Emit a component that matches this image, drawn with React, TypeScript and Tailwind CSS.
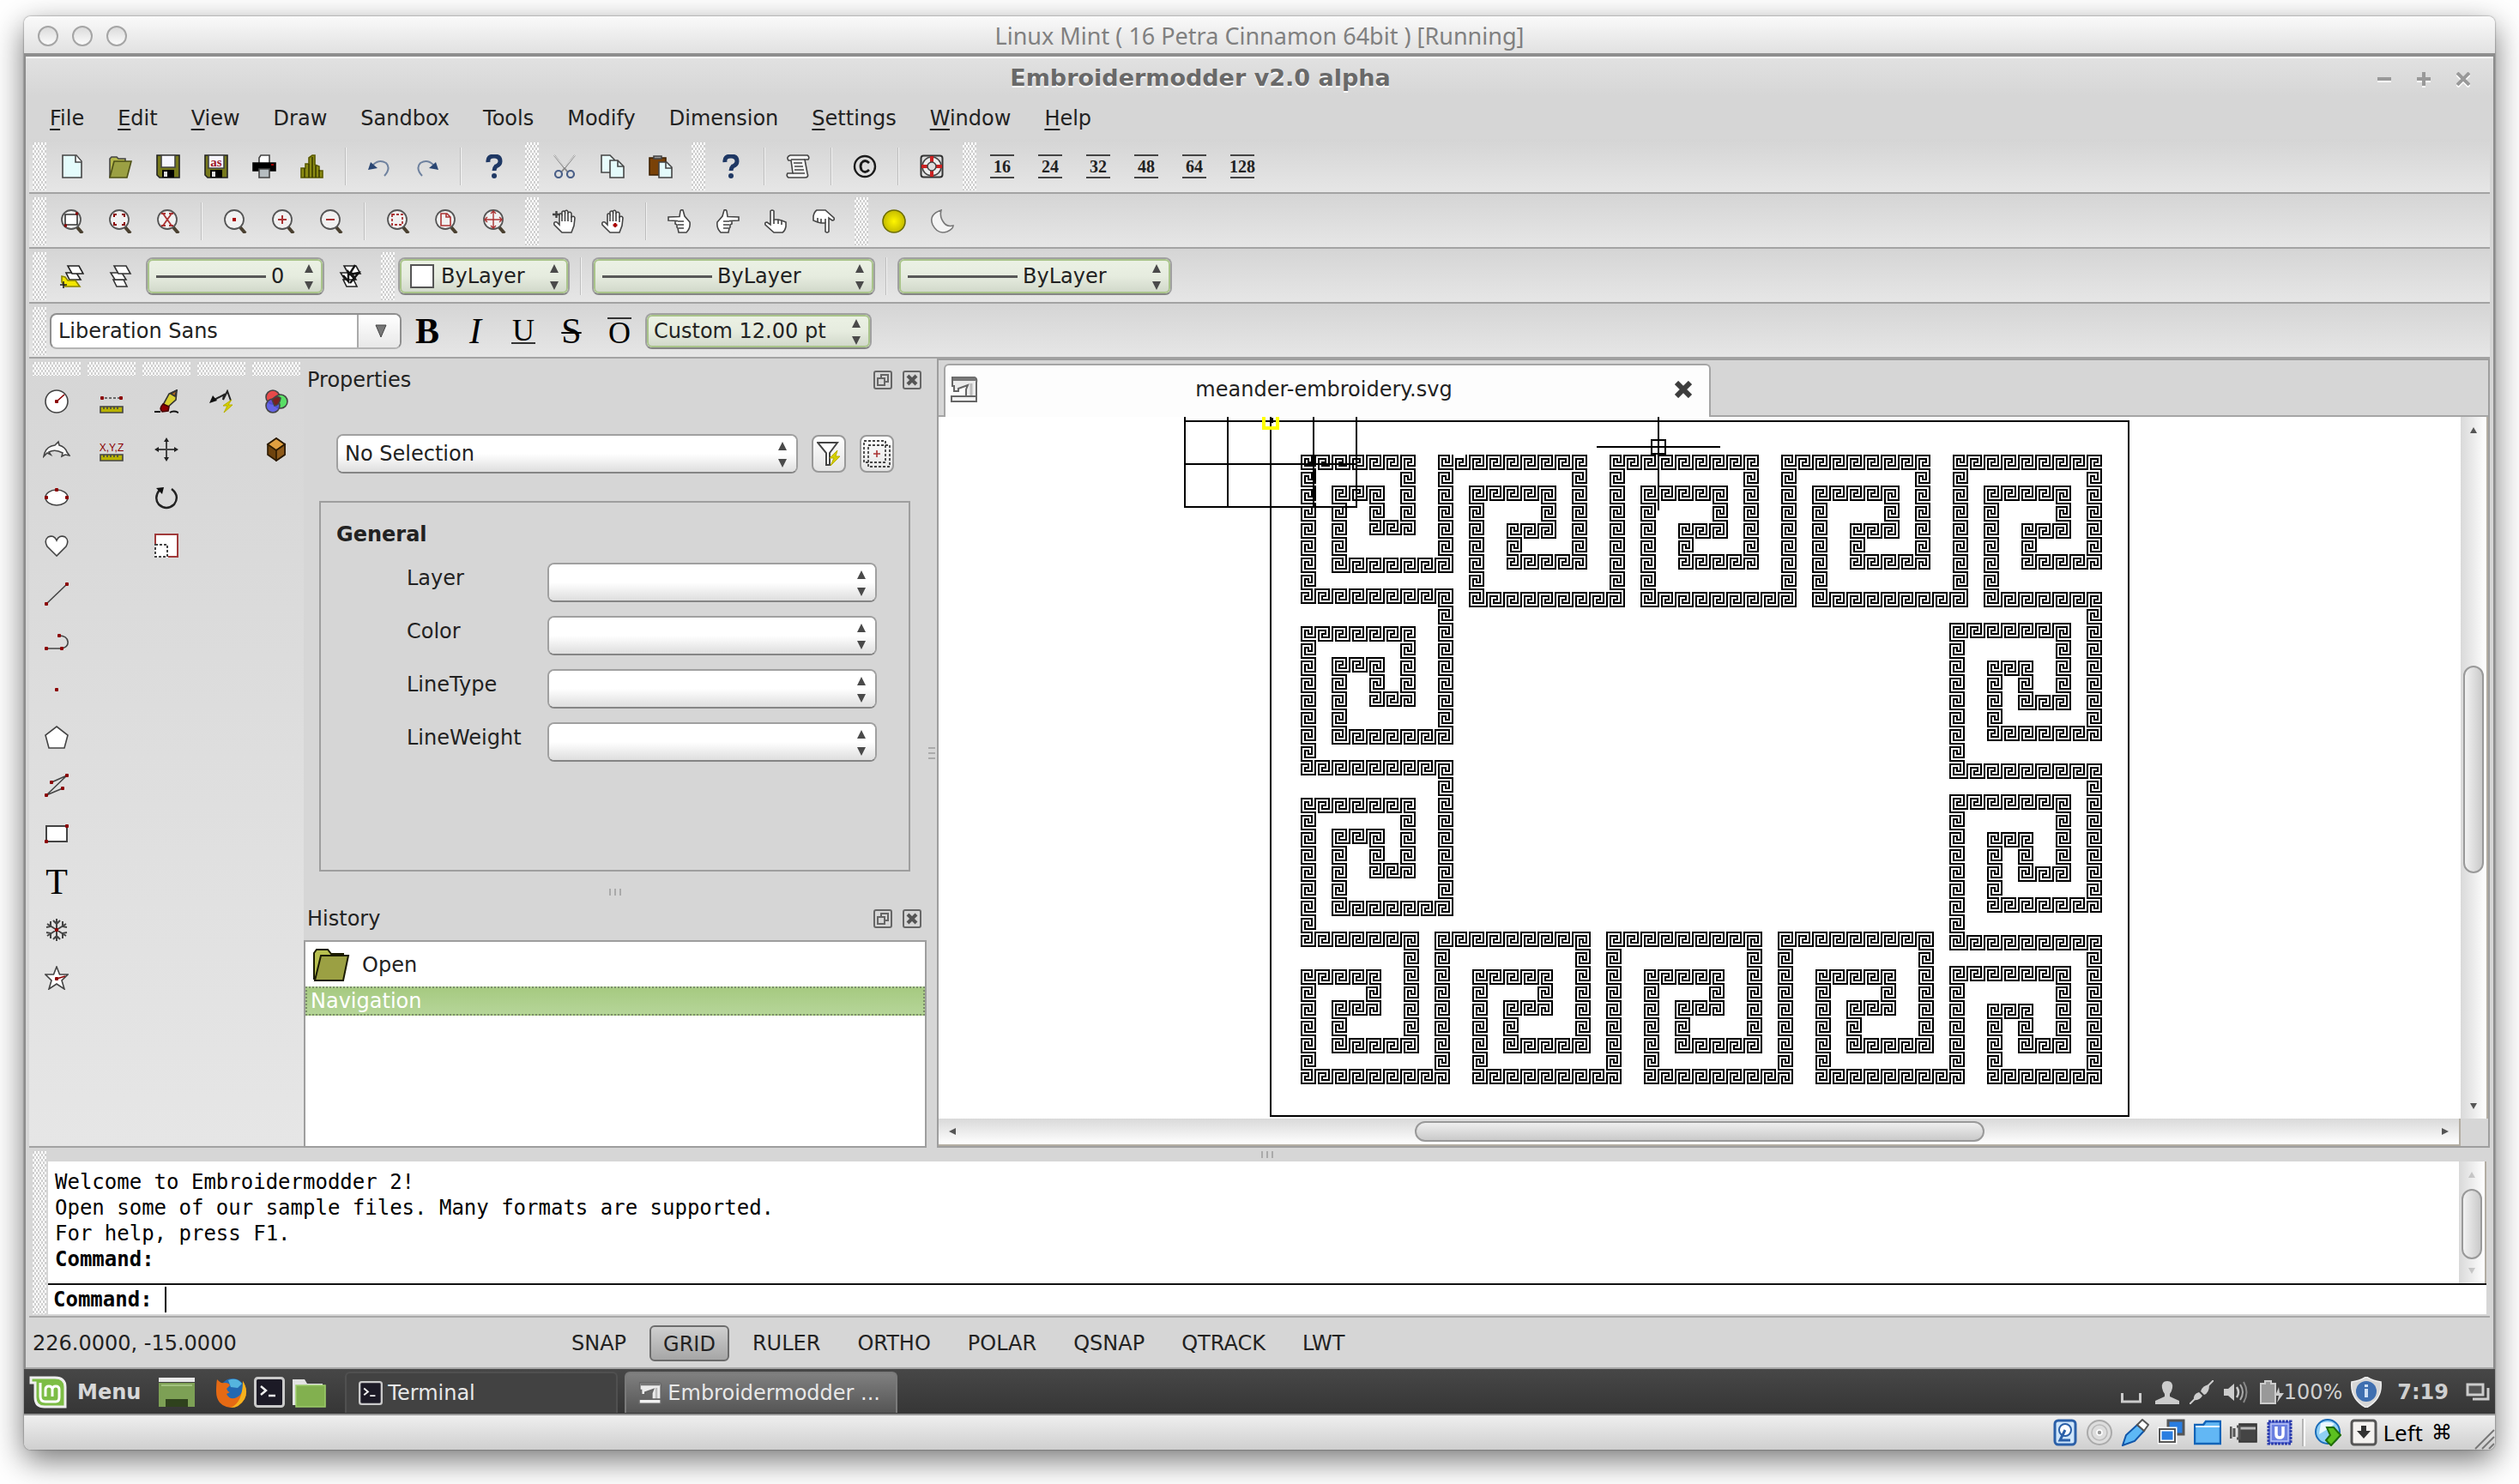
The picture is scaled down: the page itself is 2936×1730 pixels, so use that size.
import React from "react";

/* ---------- meander drawing ---------- */

type Pt = [number, number];

const H_CORE: Pt[] = [[0, 0], [8, 0], [8, 6], [4, 6], [4, 4], [6, 4], [6, 2], [2, 2], [2, 8]];
const V_CORE: Pt[] = [[8, 0], [8, 8], [2, 8], [2, 4], [4, 4], [4, 6], [6, 6], [6, 2], [0, 2]];

const H_START: Record<string, Pt[]> = { n: [[0, 8], ...H_CORE], TL1: [[0, 6], ...H_CORE], TL2: [[0, 10], ...H_CORE], BL1: [[2, 0], ...H_CORE.slice(1)] };
const H_END: Record<string, Pt[]> = { n: [[10, 8]], TR1: [[8, 8]], BR2: [[10, 8], [10, -2], [2, -2]] };
const V_START: Record<string, Pt[]> = { n: [[0, 0], ...V_CORE], TL1: V_CORE.slice(1), TR1: [[2, 0], ...V_CORE], TR2: [[-2, 8], [-2, 0], ...V_CORE] };
const V_END: Record<string, Pt[]> = { n: [[0, 10]], BR1: [[0, 8]], BL2: [[0, 10], [10, 10]] };

const parts: string[] = [];
const emit = (pts: Pt[], x: number, y: number) =>
  parts.push("M" + pts.map(([a, b]) => `${a + x} ${b + y}`).join("L"));

function h(y: number, from: number, to: number, s = "n", e = "n") {
  for (let x = from; x <= to; x += 10) {
    emit([...H_START[x === from ? s : "n"], ...H_END[x === to ? e : "n"]], x, y);
  }
}
function v(x: number, from: number, to: number, s = "n", e = "n") {
  for (let y = from; y <= to; y += 10) {
    emit([...V_START[y === from ? s : "n"], ...V_END[y === to ? e : "n"]], x, y);
  }
}

/* top border */
for (const X of [98, 198, 298, 398]) {
  v(X, 18, X === 98 ? 68 : 88, "TL1");
  if (X === 98) {
    emit([[0, 6], [0, 0]], 106, 20);
    emit([...H_CORE.slice(1), [10, 8]], 106, 20);
    h(20, 116, 176, "n", "TR1");
  } else h(20, X + 8, X + 78, "TL1", "TR1");
  v(X + 78, 28, 78, "TR1", "BR1");
  h(78, X + 38, X + 68, "BL1");
  v(X + 40, 58, 68, "TL1");
  h(60, X + 48, X + 58, "TL1", "BR2");
  v(X + 60, 38, 48, "TR2");
  h(38, X + 18, X + 48, "TL2");
  v(X + 18, 48, 98, "n", "BL2");
  if (X === 398) h(100, X + 28, X + 78, "n", "TR1");
  else h(100, X + 28, X + 98, "n", "BR2");
}
/* left border */
for (const Y of [0, 100, 200]) {
  v(18, Y + 18, Y + 88, "TL1");
  h(Y + 20, 26, 76, "TL1", "TR1");
  v(76, Y + 28, Y + 58, "TR1", "BR1");
  h(Y + 58, 56, 66, "BL1");
  v(58, Y + 38, Y + 48, "TR2");
  h(Y + 38, 36, 46, "TL2");
  v(36, Y + 48, Y + 78, "n", "BL2");
  h(Y + 80, 46, 96, "n", "BR2");
  if (Y > 0) v(98, Y - 2, Y + 68, "TR2");
  h(Y + 98, 16, Y === 200 ? 66 : 86, "BL1");
}
/* bottom border */
for (const X of [0, 100, 200, 300]) {
  v(X + 78, 298, 348, "TR2");
  h(360, X + 46, X + 76, "n", "BR2");
  v(X + 36, 348, 358, "n", "BL2");
  h(338, X + 36, X + 46, "TL2");
  v(X + 56, 328, 338, "TR1", "BR1");
  h(320, X + 26, X + 56, "TL1", "TR1");
  v(X + 18, 318, 368, "TL1");
  h(378, X + 16, X + 86, "BL1");
  v(X + 96, X === 300 ? 328 : 308, 378, "n", "BR1");
  if (X < 300) h(298, X + 96, X + 166, "TL2");
}
/* right border */
for (const Y of [100, 200, 300]) {
  v(476, Y + 8, Y + 78, "TR1", "BR1");
  h(Y + 78, 416, 466, "BL1");
  v(418, Y + 38, Y + 68, "TL1");
  h(Y + 40, 426, 436, "TL1", "TR1");
  v(436, Y + 48, Y + 58, "TR1", "BL2");
  h(Y + 60, 446, 456, "n", "BR2");
  v(458, Y + 18, Y + 48, "TR2");
  h(Y + 18, 396, 446, "TL2");
  if (Y < 300) {
    v(396, Y + 28, Y + 98, "n", "BL2");
    h(Y + 100, 406, 476, "n", "TR1");
  }
}
const MEANDER = parts.join("");

function Drawing() {
  return (
    <svg className="block h-full w-full" role="img" aria-label="meander-embroidery.svg drawing" shapeRendering="crispEdges">
      <g transform="translate(387 5) scale(2)" fill="none" stroke="#000" strokeWidth="1">
        <path d="M0 0H500V405H0Z" />
        <path d="M-50 -3V50H50V-3M-50 0H0M-50 25H50M-25 -3V50M0 -3V50M25 -3V50" />
        <path d={MEANDER} strokeLinecap="square" />
        <path d="M-4 -4V4H4V-4" stroke="#ff0" strokeWidth="2" />
        <path d="M0 -3V2M1 -2V1" />
        <path d="M190 15H262M226 -3V52M222 11H230V19H222Z" />
      </g>
    </svg>
  );
}

/* ---------- icons ---------- */

const S = ({ children, size = "size-7", vb = "0 0 28 28" }: { children: React.ReactNode; size?: string; vb?: string }) => (
  <svg className={size + " block shrink-0"} viewBox={vb} fill="none" stroke="#444" strokeWidth="1.6" aria-hidden="true">
    {children}
  </svg>
);
const R = "#8b0000";

const icons: Record<string, React.ReactNode> = {
  new: <S><path d="M3 1H19L25 8V27H3Z" fill="#e4fbfb" /><path d="M18 1V9H25" fill="#fff" /></S>,
  open: <S><path d="M2 27V5L4 3H10L12 5H20V9" fill="#b5b84c" /><path d="M7 8H27L22 27H2Z" fill="#9ba043" stroke="#4d5016" /></S>,
  save: <S><path d="M1 1H27V27H4L1 24Z" fill="#77791c" stroke="#222" /><path d="M6 1H22V15H6Z" fill="#f6f6ff" /><path d="M7 18H21V27H7Z" fill="#000" stroke="none" /><path d="M9 20H13V26H9Z" fill="#ddd" stroke="none" /></S>,
  saveas: <S><path d="M1 1H27V27H4L1 24Z" fill="#77791c" stroke="#222" /><path d="M5 1H23V16H5Z" fill="#f6f6ff" /><text x="14" y="14" textAnchor="middle" fontFamily="Liberation Serif" fontWeight="700" fontSize="15" fill="#a01828" stroke="none">as</text><path d="M7 18H21V27H7Z" fill="#000" stroke="none" /><path d="M9 20H13V26H9Z" fill="#ddd" stroke="none" /></S>,
  print: <S><path d="M8 10V4L10 1H20V10" fill="#fff" /><path d="M1 10H27V19H1Z" fill="#000" stroke="#000" /><path d="M22 12h3" stroke="#c00" /><path d="M8 17H20V27H8Z" fill="#b5bcc0" /></S>,
  design: <S><path d="M1 27V16H6V11H10V4L14 1H17V12L22 14V19H26V27Z" fill="#8b8b12" stroke="#5a5a00" /><path d="M5 16V27M10 11V27M14 3V27M18 13V27M22 18V27" stroke="#3b3b00" /></S>,
  undo: <S><path d="M7 12Q14 5 22 10Q28 16 20 25" stroke="#6f829f" strokeWidth="2" /><path d="M1 18L4 9L12 16Z" fill="#2a4673" stroke="none" /></S>,
  redo: <S><path d="M21 12Q14 5 6 10Q0 16 8 25" stroke="#6f829f" strokeWidth="2" /><path d="M27 18L24 9L16 16Z" fill="#2a4673" stroke="none" /></S>,
  help: <S><path d="M7 9Q6 2 14 2Q21 2 21 8Q21 12 16 14Q14 16 14 19" stroke="#1f3864" strokeWidth="5" /><circle cx="14" cy="25" r="3" fill="#1f3864" stroke="none" /></S>,
  cut: <S><path d="M2 1L18 21M26 1L10 21" stroke="#888" strokeWidth="2" /><path d="M2 1L14 15L26 1" stroke="#eee" strokeWidth="1" /><circle cx="7" cy="23" r="4" stroke="#4a5f88" strokeWidth="2.2" /><circle cx="21" cy="23" r="4" stroke="#4a5f88" strokeWidth="2.2" /></S>,
  copy: <S><path d="M1 1H11L16 6V21H1Z" fill="#e8fbfb" /><path d="M11 7H20L27 14V27H11Z" fill="#e4fbfb" /><path d="M20 7V14H27" /></S>,
  paste: <S><path d="M1 4H20V24H1Z" fill="#7a4208" stroke="#3d2000" /><path d="M6 5V2H15V5Z" fill="#999" /><path d="M12 9H21L27 15V27H12Z" fill="#e4fbfb" /><path d="M20 9V16H27" /></S>,
  scroll: <S><path d="M5 1H25Q28 3 26 6H22L25 22Q27 27 22 27H3Q0 25 2 22H8L6 7H3Q0 3 5 1Z" fill="#f4f4f4" /><path d="M6 6H22M9 10H19M10 14H20M10 18H21M8 22H22" /></S>,
  copyright: <S><circle cx="14" cy="14" r="12" stroke="#1b1b1b" strokeWidth="2.4" /><path d="M19 10Q14 5 10 10Q8 14 10 18Q14 23 19 18" stroke="#1b1b1b" strokeWidth="2.8" /></S>,
  ring: <S><rect x="1.5" y="1.5" width="25" height="25" rx="3" stroke="#333" strokeWidth="2" /><circle cx="14" cy="14" r="11" fill="#eee" /><path d="M14 2V9M14 19V26M2 14H9M19 14H26" stroke="#c22" strokeWidth="4" /><circle cx="14" cy="14" r="5" fill="#ddd" /></S>,
  sun: <S><circle cx="14" cy="14" r="13" fill="url(#sunFill)" stroke="#6d6d00" /><defs><radialGradient id="sunFill"><stop offset="0" stopColor="#fff600" /><stop offset="1" stopColor="#c4bb00" /></radialGradient></defs></S>,
  moon: <S><path d="M13 1Q-2 6 3 18Q9 30 20 26Q27 23 27 19Q19 21 15 14Q11 8 13 1Z" fill="#f4f4f4" stroke="#777" /></S>,
  layers1: <S><path d="M7 10H19L24 18H11Z" fill="#fff" stroke="#222" /><path d="M9 2H22L27 11H14Z" fill="#fff" stroke="#222" /><path d="M2 14L6 15L9 19H18L23 26H6L2 21Z" fill="#f2e600" stroke="#8a8400" /><path d="M4 20V28M0 24H8" stroke="#222" /></S>,
  layers2: <S><path d="M6 18H18L22 26H10Z" fill="#fff" stroke="#333" /><path d="M3 10H16L21 18H8Z" fill="#fff" stroke="#333" /><path d="M7 2H21L26 11H12Z" fill="#fff" stroke="#333" /></S>,
  layers3: <S><path d="M6 18H18L22 26H10Z M3 10H16L21 18H8Z M7 2H21L26 11H12Z" fill="#fff" stroke="#222" /><path d="M20 1L13 12L24 10L14 22M6 13L12 20V9L20 18" stroke="#111" strokeWidth="2.4" /></S>,
};

const Lens = ({ children }: { children: React.ReactNode }) => (
  <S>
    <path d="M20 21L26 28" stroke="#4a4030" strokeWidth="4" />
    <circle cx="13" cy="12" r="11" fill="#f1f1f1" stroke="#555" strokeWidth="1.8" />
    {children}
  </S>
);
const lens: Record<string, React.ReactNode> = {
  window: <Lens><path d="M6 6H20V18H6Z" fill="#fff" stroke="#333" /><path d="M18 5h3M5 19h3" stroke={R} strokeWidth="3" /></Lens>,
  dynamic: <Lens><path d="M7 9V6H10M16 6H19V9M7 15V18H10M16 18H19V15" stroke={R} strokeWidth="2" /></Lens>,
  scale: <Lens><path d="M8 5L18 19M18 5L8 19M6 5h5M15 5h5M6 19h5M15 19h5" stroke="#a33" strokeWidth="1.8" /></Lens>,
  center: <Lens><path d="M13 10V14" stroke="#a00" strokeWidth="4" /></Lens>,
  in: <Lens><path d="M13 7V17M8 12H18" stroke="#a33" strokeWidth="2" /></Lens>,
  out: <Lens><path d="M8 12H18" stroke="#a33" strokeWidth="2" /></Lens>,
  selected: <Lens><path d="M7 6H19V18H7Z" stroke="#a33" strokeDasharray="3 2" strokeWidth="1.8" /></Lens>,
  all: <Lens><path d="M8 5H15L19 9V19H8ZM14 5V9H19" stroke="#a33" strokeWidth="1.6" /></Lens>,
  extents: <Lens><path d="M13 2V22M3 12H23M10 5L13 2L16 5M10 19L13 22L16 19M6 9L3 12L6 15M20 9L23 12L20 15" stroke="#a33" strokeWidth="1.4" /></Lens>,
};

const palm = "M8 18V6Q9 4 11 6V3Q13 1 14.500 3V2Q17 0 18 3V4Q21 2 22 5V9Q25 7 26 10L25 19L22 27H11L2 18Q1 14 5 15Z";
const pointSide = "M2 15L8 8L10 1Q12 0 13 2L14 8.500L27 9V13L16 13.500L19 14V17L17 18V21L16 22L15 27H6Q1 22 2 15Z";
const pointUp = "M8 16V2Q10 0 12 2V12H17L21 13L26 15V20Q25 25 22 27H12L2 18Q1 15 4 15L8 18Z";
const hands: Record<string, React.ReactNode> = {
  panReal: <S><path d={palm} fill="#fff" /><path d="M11 6V14M14.500 3V14M18 4V14M22 8V15" /><path d="M0 6H9M4.500 2V10" strokeWidth="2.4" /></S>,
  panPoint: <S><path d={palm} fill="#fff" /><path d="M11 6V14M14.500 3V14M18 4V14M22 8V15" /><path d="M17 16V21M14.500 18.500H19.500" stroke="#a00" strokeWidth="2.5" /></S>,
  left: <S><g transform="matrix(-1 0 0 1 28 0)"><path d={pointSide} fill="#fff" /><path d="M9 14H16M9 18H16M9 22H15" /></g></S>,
  right: <S><path d={pointSide} fill="#fff" /><path d="M9 14H16M9 18H16M9 22H15" /></S>,
  up: <S><path d={pointUp} fill="#fff" /><path d="M12 12V17M17 12V17M21 13V18" /></S>,
  down: <S><g transform="rotate(180 14 14)"><path d={pointUp} fill="#fff" /><path d="M12 12V17M17 12V17M21 13V18" /></g></S>,
};

const Dot = ({ x, y }: { x: number; y: number }) => <rect x={x - 2} y={y - 2} width="4" height="4" rx="1" fill={R} stroke="none" />;
const snow = "M14 1V27M3 7L25 21M3 21L25 7M10 3L14 7L18 3M10 25L14 21L18 25M2 11L7 10L7 4M26 11L21 10L21 4M2 17L7 18L7 24M26 17L21 18L21 24";

const toolbox: { name: string; icon: React.ReactNode }[][] = [
  [
    { name: "Circle", icon: <S><circle cx="14" cy="14" r="13" fill="#fff" /><path d="M14 14L23 6" stroke={R} /><Dot x={14} y={14} /></S> },
    { name: "Dolphin", icon: <S size="h-7 w-8" vb="0 0 32 28"><path d="M2 18Q5 10 14 9L18 5L19 9Q26 11 28 17L31 21L26 20L22 22L23 18Q14 13 7 17L9 20L5 18L1 22Z" fill="#f8f8f8" /></S> },
    { name: "Ellipse", icon: <S><ellipse cx="14" cy="14" rx="13" ry="9" fill="#fff" /><Dot x={14} y={5} /><Dot x={2} y={14} /><Dot x={26} y={14} /></S> },
    { name: "Heart", icon: <S><path d="M14 26L3 15Q-1 8 4 4Q11 1 14 8Q17 1 24 4Q29 8 25 15Z" fill="#fff" /></S> },
    { name: "Line", icon: <S><path d="M2 26L26 3" /><Dot x={2} y={26} /><Dot x={26} y={3} /></S> },
    { name: "Path", icon: <S><path d="M2 22H20Q28 20 27 14Q26 7 17 7" /><Dot x={2} y={22} /><Dot x={20} y={22} /><Dot x={17} y={7} /></S> },
    { name: "Point", icon: <S><Dot x={14} y={14} /></S> },
    { name: "Polygon", icon: <S><path d="M14 1L27 11L23 26H5L1 11Z" fill="#fff" /></S> },
    { name: "Polyline", icon: <S><path d="M8 10L26 2L2 25L21 17" /><Dot x={8} y={10} /><Dot x={26} y={2} /><Dot x={2} y={25} /><Dot x={21} y={17} /></S> },
    { name: "Rectangle", icon: <S><path d="M2 5H26V23H2Z" fill="#fff" strokeWidth="2" /><Dot x={2} y={23} /><Dot x={26} y={5} /></S> },
    { name: "Text", icon: <span className="font-[Liberation_Serif,serif] text-[42px] leading-none text-black">T</span> },
    { name: "Snowflake", icon: <S><path d={snow} strokeWidth="2" /><Dot x={14} y={14} /></S> },
    { name: "Star", icon: <S><path d="M14 1L17.500 10L27 10L20 17L23 27L14 21L5 27L8 17L1 10L10.500 10Z" fill="#fff" /><path d="M14 15L24 12" stroke={R} /><Dot x={14} y={15} /></S> },
  ],
  [
    { name: "Distance", icon: <S><path d="M1 10H27" strokeDasharray="3 2" /><Dot x={3} y={10} /><Dot x={25} y={10} /><path d="M1 20H27V27H1Z" fill="#b9b300" stroke="#444" /><path d="M5 20v3M9 20v3M13 20v3M17 20v3M21 20v3" /></S> },
    { name: "Locate point", icon: <S><text x="14" y="16" textAnchor="middle" fontFamily="Liberation Sans" fontSize="12" fill={R} stroke="none">X,Y,Z</text><path d="M1 20H27V27H1Z" fill="#b9b300" stroke="#444" /><path d="M5 20v3M9 20v3M13 20v3M17 20v3M21 20v3" /></S> },
  ],
  [
    { name: "Erase", icon: <S><path d="M26 1L17 5L10 18L15 21L25 12Z" fill="#d8cf30" stroke="#333" /><path d="M26 1L19 5L24 8Z" fill="#b06a20" stroke="#333" /><path d="M10 17Q5 22 9 26L16 25L17 20Z" fill={R} stroke="#400" /><path d="M0 26H7M18 27Q22 24 28 27" stroke="#111" strokeWidth="2" /></S> },
    { name: "Move", icon: <S><path d="M14 3V25M3 14H25" strokeWidth="2" /><path d="M14 0L17 5H11ZM14 28L17 23H11ZM0 14L5 11V17ZM28 14L23 11V17Z" fill="#222" stroke="none" /></S> },
    { name: "Rotate", icon: <S><path d="M6 5Q-1 14 5 22Q14 30 23 22Q30 12 20 4" stroke="#222" strokeWidth="2.4" /><path d="M11 2L2 3L9 10Z" fill="#111" stroke="none" /></S> },
    { name: "Scale", icon: <S><path d="M1 1H27V27H1Z" fill="#fff" stroke="#a03a3a" strokeWidth="2" /><path d="M1 13H15V27H1Z" fill="#fff" stroke="#fff" strokeWidth="2" /><path d="M1 13H15V27H1Z" strokeDasharray="3 2" strokeWidth="2" /></S> },
  ],
  [
    { name: "Quick leader", icon: <S><path d="M4 13L17 6L16 12L21 2L25 13" stroke="#222" strokeWidth="2" /><path d="M0 16L4 7L9 13Z" fill="#111" stroke="none" /><path d="M26 12L16 19H21L17 27L27 18H22Z" fill="#d6d000" stroke="#b8b000" strokeWidth="1" /></S> },
  ],
  [
    { name: "Color selector", icon: <S><circle cx="10" cy="9" r="8" fill="#e84a4a" /><circle cx="19" cy="14" r="8" fill="#4be05a" fillOpacity=".9" /><circle cx="10" cy="19" r="8" fill="#5050e8" fillOpacity=".85" /><path d="M9 12Q14 6 19 10Q18 18 12 19Z" fill="#7a2020" /></S> },
    { name: "Block", icon: <S><path d="M14 1L24 8V20L14 27L4 20V8Z" fill="#6e430d" stroke="#2b1a00" /><path d="M14 1L24 8L14 15L4 8Z" fill="#e0a040" stroke="#2b1a00" /><path d="M14 15L24 8V20L14 27Z" fill="#8e5a1a" stroke="#2b1a00" /></S> },
  ],
];

const Machine = ({ size = "size-8" }: { size?: string }) => (
  <S size={size} vb="0 0 32 32">
    <path d="M2 2H28Q31 3 30 8V26H18V16L20 11L9 15V18H4V12H2Z" fill="#ececec" stroke="#666" strokeWidth="2" />
    <path d="M3 4H29" stroke="#777" strokeWidth="4" />
    <path d="M24 9V24" stroke="#bbb" strokeWidth="3" />
    <path d="M1 24H30V30H1Z" fill="#f2f2f2" stroke="#666" strokeWidth="2" />
  </S>
);

/* ---------- pieces of chrome ---------- */

const Grip = ({ className }: { className: string }) => (
  <div className={"shrink-0 bg-[conic-gradient(#ffffff_25%,#d0d0d0_0_50%,#ffffff_0_75%,#d0d0d0_0)] bg-[length:4px_6px] " + className} />
);
const Btn = ({ label, children }: { label: string; children: React.ReactNode }) => (
  <button type="button" aria-label={label} className="flex h-14 w-14 shrink-0 items-center justify-center">
    {children}
  </button>
);
const Sep = () => (
  <div className="flex w-[22px] shrink-0 justify-center">
    <div className="h-11 w-0.5 border-r border-white/80 bg-[#bdbdbd]" />
  </div>
);
const Bar = ({ children }: { children: React.ReactNode }) => (
  <div className="flex h-16 items-center gap-2 border-b-2 border-[#a3a3a3] bg-gradient-to-b from-[#d5d5d5] to-[#e6e6e6] pt-0.5 pl-1">{children}</div>
);
const Group = ({ children }: { children: React.ReactNode }) => (
  <div className="flex items-center">
    <Grip className="mr-0.5 h-14 w-4" />
    {children}
  </div>
);
const Arrows = () => (
  <svg className="pointer-events-none h-8 w-3 shrink-0" viewBox="0 0 12 32" fill="#4a4a4a" aria-hidden="true">
    <path d="M6 2L11 12H1ZM6 32L11 22H1Z" />
  </svg>
);

function Combo({ label, value, green, line, swatch, width, height = "h-[44px]" }: {
  label: string; value: string; green?: boolean; line?: boolean; swatch?: boolean; width: string; height?: string;
}) {
  return (
    <div className={"mx-0.5 shrink-0 rounded-lg border-2 border-[#a0a0a0] border-b-[#858585] bg-white " + width + " " + height}>
      <div
        className={
          "flex h-full items-center rounded-md " +
          (green
            ? "border-2 border-[#a9c48a] bg-gradient-to-b from-[#ebf1e4] via-[#e6ecdf] to-[#d2d9cb] pr-2 pl-1.5"
            : "bg-gradient-to-b from-white from-50% to-[#dedede] pr-2.5 pl-2")
        }
      >
        {line && <span className="mr-1.5 ml-0.5 h-[3px] w-32 shrink-0 bg-[#585858]" />}
        {swatch && <span className="mr-2 ml-1 h-7 w-7 shrink-0 border-2 border-[#555] bg-white" />}
        <select aria-label={label} className="w-0 flex-1 appearance-none bg-transparent text-[24px] leading-[30px] text-[#222] outline-none">
          <option>{value}</option>
        </select>
        <Arrows />
      </div>
    </div>
  );
}

const menus = ["_File", "_Edit", "_View", "Draw", "Sandbox", "Tools", "Modify", "Dimension", "_Settings", "_Window", "_Help"];

const DockHeader = ({ title }: { title: string }) => (
  <div className="flex h-[50px] shrink-0 items-center gap-3 pr-1.5 pl-1">
    <h2 className="flex-1">{title}</h2>
    <button type="button" aria-label={"Float " + title}>
      <S size="h-[22px] w-[22px]" vb="0 0 22 22"><rect x="1" y="1" width="20" height="20" rx="2" stroke="#666" strokeWidth="2" /><path d="M9 9V5H17V13H13M5 9H13V17H5Z" stroke="#666" strokeWidth="2" /></S>
    </button>
    <button type="button" aria-label={"Close " + title}>
      <S size="h-[22px] w-[22px]" vb="0 0 22 22"><rect x="1" y="1" width="20" height="20" rx="2" stroke="#666" strokeWidth="2" /><path d="M6 6L16 16M16 6L6 16" stroke="#555" strokeWidth="4" /></S>
    </button>
  </div>
);

const VScroll = ({ dim, children }: { dim?: boolean; children: React.ReactNode }) => (
  <div className="flex w-8 shrink-0 flex-col items-center border-r-2 border-[#b3ada2] bg-gradient-to-r from-[#d9d9d9] to-white px-0.5">
    <button type="button" aria-label="Scroll up" className={"flex h-8 w-full items-center justify-center " + (dim ? "opacity-25" : "")}>
      <svg className="size-2" viewBox="0 0 8 8" fill="#555"><path d="M4 0L8 7H0Z" /></svg>
    </button>
    {children}
    <button type="button" aria-label="Scroll down" className={"flex h-7 w-full items-center justify-center " + (dim ? "opacity-25" : "")}>
      <svg className="size-2" viewBox="0 0 8 8" fill="#555"><path d="M4 7L8 0H0Z" /></svg>
    </button>
  </div>
);

const statusModes = ["SNAP", "GRID", "RULER", "ORTHO", "POLAR", "QSNAP", "QTRACK", "LWT"];

const TermIcon = ({ size }: { size: string }) => (
  <S size={size} vb="0 0 36 36">
    <rect x="1.500" y="1.500" width="33" height="33" rx="3" fill="#1c1a26" stroke="#c9c9c9" strokeWidth="3" />
    <path d="M8 11L14 16L8 21M17 22H25" stroke="#eee" strokeWidth="2.500" />
  </S>
);

/* ---------- page ---------- */

export default function App() {
  return (
    <div className="flex min-h-screen flex-col overflow-hidden bg-white px-7 pt-[19px] pb-10 font-['DejaVu_Sans',sans-serif] text-[24px] leading-[30px] text-[#222]">
      <div className="flex flex-1 flex-col overflow-hidden rounded-lg shadow-[0_12px_36px_rgba(0,0,0,0.55),0_0_2px_rgba(0,0,0,0.6)]">
        {/* host title bar */}
        <header className="flex h-[43px] shrink-0 items-center bg-gradient-to-b from-[#fafafa] to-[#e1e1e1] px-4 pt-0.5">
          <div className="flex w-24 gap-4">
            {["Close", "Minimize", "Zoom"].map((n) => (
              <button key={n} type="button" aria-label={n} className="size-6 shrink-0 rounded-full border-2 border-[#a5a5a5] bg-gradient-to-b from-[#dcdcdc] to-[#fbfbfb]" />
            ))}
          </div>
          <div className="flex-1 text-center font-['Noto_Sans',sans-serif] text-[27px] text-[#808080]">Linux Mint ( 16 Petra Cinnamon 64bit ) [Running]</div>
          <div className="w-24" />
        </header>

        <div className="flex flex-1 flex-col border-x-2 border-t-4 border-x-[#8c8c8c] border-t-[#8e8e8e] bg-[#d6d6d6]">
          {/* guest window title */}
          <div className="flex h-[46px] shrink-0 items-center border-t-2 border-white bg-gradient-to-b from-[#e1e1e1] to-[#d6d6d6] pr-3 pl-3">
            <h1 className="flex-1 pt-0.5 text-center text-[27px] font-bold text-[#696969] [text-shadow:0_2px_0_#fff]">Embroidermodder v2.0 alpha</h1>
            {["M0 8H16", "M8 0V16M0 8H16", "M1 1L15 15M15 1L1 15"].map((d, i) => (
              <button key={d} type="button" aria-label={["Minimize window", "Maximize window", "Close window"][i]} className="flex h-9 w-[46px] items-center justify-center pt-1">
                <svg className="size-4 drop-shadow-[0_2px_0_#fff]" viewBox="0 0 16 16" stroke="#999" strokeWidth="4"><path d={d} /></svg>
              </button>
            ))}
          </div>
          <div className="flex flex-1 flex-col px-1">
            <nav className="flex h-[50px] shrink-0 items-center gap-[39px] pt-0.5 pl-6">
              {menus.map((m) => (
                <button key={m} type="button">
                  {m[0] === "_" ? (<><span className="underline decoration-2 underline-offset-4">{m[1]}</span>{m.slice(2)}</>) : m}
                </button>
              ))}
            </nav>

            <Bar>
              <Group>
                <Btn label="New">{icons.new}</Btn><Btn label="Open">{icons.open}</Btn><Btn label="Save">{icons.save}</Btn>
                <Btn label="Save as">{icons.saveas}</Btn><Btn label="Print">{icons.print}</Btn><Btn label="Design details">{icons.design}</Btn>
                <Sep /><Btn label="Undo">{icons.undo}</Btn><Btn label="Redo">{icons.redo}</Btn><Sep /><Btn label="Help">{icons.help}</Btn>
              </Group>
              <Group><Btn label="Cut">{icons.cut}</Btn><Btn label="Copy">{icons.copy}</Btn><Btn label="Paste">{icons.paste}</Btn></Group>
              <Group>
                <Btn label="Help contents">{icons.help}</Btn><Sep /><Btn label="Changelog">{icons.scroll}</Btn><Sep />
                <Btn label="About">{icons.copyright}</Btn><Sep /><Btn label="Support">{icons.ring}</Btn>
              </Group>
              <Group>
                {["16", "24", "32", "48", "64", "128"].map((n) => (
                  <button key={n} type="button" className="flex h-14 w-14 items-center justify-center">
                    <span className="flex h-7 w-7 items-center justify-center border-y-2 border-[#444] font-['Liberation_Serif',serif] text-[20px] leading-none font-bold">{n}</span>
                  </button>
                ))}
              </Group>
            </Bar>

            <Bar>
              <Group>
                <Btn label="Zoom window">{lens.window}</Btn><Btn label="Zoom dynamic">{lens.dynamic}</Btn><Btn label="Zoom scale">{lens.scale}</Btn><Sep />
                <Btn label="Zoom center">{lens.center}</Btn><Btn label="Zoom in">{lens.in}</Btn><Btn label="Zoom out">{lens.out}</Btn><Sep />
                <Btn label="Zoom selected">{lens.selected}</Btn><Btn label="Zoom all">{lens.all}</Btn><Btn label="Zoom extents">{lens.extents}</Btn>
              </Group>
              <Group>
                <Btn label="Pan real time">{hands.panReal}</Btn><Btn label="Pan point">{hands.panPoint}</Btn><Sep />
                <Btn label="Pan left">{hands.left}</Btn><Btn label="Pan right">{hands.right}</Btn><Btn label="Pan up">{hands.up}</Btn><Btn label="Pan down">{hands.down}</Btn>
              </Group>
              <Group><Btn label="Day view">{icons.sun}</Btn><Btn label="Night view">{icons.moon}</Btn></Group>
            </Bar>

            <Bar>
              <Group>
                <Btn label="Make layer current">{icons.layers1}</Btn><Btn label="Layers">{icons.layers2}</Btn>
                <Combo label="Layer" value="0" green line width="w-[208px]" />
                <Btn label="Layer previous">{icons.layers3}</Btn>
              </Group>
              <Group>
                <Combo label="Current color" value="ByLayer" green swatch width="w-[200px]" /><Sep />
                <Combo label="Current line type" value="ByLayer" green line width="w-[330px]" /><Sep />
                <Combo label="Current line weight" value="ByLayer" green line width="w-[320px]" />
              </Group>
            </Bar>

            <Bar>
              <Group>
                <div className="mx-0.5 flex h-[42px] w-[410px] items-center overflow-hidden rounded-lg border-2 border-[#8f8f8f] border-b-[#b5b5b5] bg-white">
                  <input aria-label="Font" defaultValue="Liberation Sans" className="h-full min-w-0 flex-1 px-2 text-[24px] outline-none" />
                  <button type="button" aria-label="Font list" className="flex h-full w-[50px] items-center justify-center border-l-2 border-[#aaa] bg-gradient-to-b from-white to-[#e8e8e8] pl-1">
                    <svg className="size-4" viewBox="0 0 16 16"><path d="M2 1H14L8 15Z" fill="#777" stroke="#444" /></svg>
                  </button>
                </div>
                <div className="flex font-['Liberation_Serif',serif] text-black">
                  <Btn label="Bold"><span className="text-[42px] leading-none font-bold">B</span></Btn>
                  <Btn label="Italic"><span className="text-[42px] leading-none italic">I</span></Btn>
                  <Btn label="Underline"><span className="w-7 border-b-2 border-[#333] text-[36px] leading-[28px]">U</span></Btn>
                  <Btn label="Strikeout"><span className="text-[42px] leading-none line-through decoration-2">S</span></Btn>
                  <Btn label="Overline"><span className="w-7 border-t-2 border-[#333] pt-0.5 text-[36px] leading-[28px]">O</span></Btn>
                </div>
                <Combo label="Text size" value="Custom 12.00 pt" green width="w-[264px]" height="h-[42px]" />
              </Group>
            </Bar>

            {/* work area */}
            <main className="flex min-h-[700px] flex-1">
              <div className="flex w-[320px] shrink-0 gap-2 border-b-2 border-[#a3a3a3] bg-gradient-to-b from-[#d6d6d6] to-[#e6e6e6] pt-1 pl-1">
                {toolbox.map((col, i) => (
                  <div key={i} className="flex flex-col">
                    <Grip className="mb-0.5 h-4 w-14" />
                    {col.map((t) => (<Btn key={t.name} label={t.name}>{t.icon}</Btn>))}
                  </div>
                ))}
              </div>

              <aside className="flex w-[726px] shrink-0 flex-col">
                <DockHeader title="Properties" />
                <div className="flex flex-1 flex-col px-[18px] pt-[38px]">
                  <div className="flex items-center gap-4 pl-[18px]">
                    <Combo label="Selection" value="No Selection" width="w-[538px]" height="h-[46px]" />
                    <button type="button" aria-label="Quick select" className="-ml-0.5 flex h-11 w-10 items-center justify-center rounded-lg border-2 border-[#999] bg-gradient-to-b from-white to-[#e4e4e4]">
                      <S size="h-8 w-7" vb="0 0 28 32"><path d="M1 3H24L15 15V29H11V15Z" fill="#fff" stroke="#444" strokeWidth="2" /><path d="M24 12L15 21H20L16 30L27 19H22Z" fill="#d6d000" stroke="#b8b000" strokeWidth="1" /></S>
                    </button>
                    <button type="button" aria-label="Pick add" className="flex h-11 w-10 items-center justify-center rounded-lg border-2 border-[#999] bg-gradient-to-b from-white to-[#e4e4e4]">
                      <S size="h-8 w-8" vb="0 0 32 32"><path d="M1 1H26V26H1ZM6 6H31V31H6Z" strokeDasharray="3 2" strokeWidth="1.8" /><path d="M16 12V20M12 16H20" stroke="#a33" strokeWidth="1.6" /></S>
                    </button>
                  </div>
                  <fieldset className="mt-8 mr-px flex-1 border-2 border-[#9e9e9e] pl-[18px]">
                    <div className="mt-[22px] mb-[18px] font-bold">General</div>
                    <div className="flex flex-col gap-4">
                      {["Layer", "Color", "LineType", "LineWeight"].map((l) => (
                        <div key={l} className="flex">
                          <span className="ml-[82px] w-[162px] pt-[3px]">{l}</span>
                          <Combo label={l} value="" width="w-[384px]" height="h-[46px]" />
                        </div>
                      ))}
                    </div>
                  </fieldset>
                </div>
                <div className="mt-5 mb-0.5 flex h-2 shrink-0 justify-center gap-1">
                  {[0, 1, 2].map((i) => (<span key={i} className="w-0.5 bg-[#aaa]" />))}
                </div>
                <DockHeader title="History" />
                <ul className="h-[242px] shrink-0 border-2 border-[#9e9e9e] bg-white">
                  <li className="flex h-[52px] items-center gap-3.5 pt-0.5 pl-2">
                    <S size="h-10 w-11" vb="0 0 44 40"><path d="M2 37V6L5 2H18L22 7H36V12" fill="#b8c050" stroke="#1b1b00" strokeWidth="2" /><path d="M10 9H42L36 38H3Z" fill="#9ba043" stroke="#1b1b00" strokeWidth="2" /></S>
                    Open
                  </li>
                  <li className="flex h-[34px] items-center border-2 border-dotted border-[#7b8f69] bg-gradient-to-b from-[#a6ca81] to-[#b5d598] pl-1 text-white">Navigation</li>
                </ul>
              </aside>

              <div className="flex w-3 shrink-0 flex-col items-center justify-center gap-1">
                {[0, 1, 2].map((i) => (<span key={i} className="h-0.5 w-2 bg-[#aaa]" />))}
              </div>

              <section className="flex min-w-0 flex-1 flex-col border-2 border-[#9e9e9e]">
                <div className="flex h-[66px] shrink-0">
                  <div className="w-1.5 border-b-2 border-[#a5a5a5]" />
                  <div className="mt-1 flex w-[894px] items-center rounded-t-md border-2 border-b-0 border-[#a5a5a5] bg-[#fdfdfd] pr-2 pb-1 pl-1.5">
                    <Machine />
                    <span className="flex-1 pr-1.5 text-center">meander-embroidery.svg</span>
                    <button type="button" aria-label="Close tab" className="mr-3 flex size-5 items-center justify-center">
                      <svg className="size-5" viewBox="0 0 20 20" stroke="#3d3d3d" strokeWidth="6"><path d="M2 2L18 18M18 2L2 18" /></svg>
                    </button>
                  </div>
                  <div className="flex-1 border-b-2 border-[#a5a5a5]" />
                </div>
                <div className="flex min-h-0 flex-1">
                  <div className="relative min-w-0 flex-1 bg-white">
                    <div className="absolute inset-0"><Drawing /></div>
                  </div>
                  <VScroll>
                    <div className="flex flex-1 flex-col">
                      <div className="flex-[259]" />
                      <div className="w-6 flex-[240] rounded-full border-2 border-[#999] bg-gradient-to-r from-[#f2f2f2] to-[#cacaca]" />
                      <div className="flex-[259]" />
                    </div>
                  </VScroll>
                </div>
                <div className="flex h-8 shrink-0">
                  <div className="flex min-w-0 flex-1 items-center border-r-2 border-b-2 border-[#b3ada2] bg-gradient-to-b from-[#d9d9d9] to-white">
                    <button type="button" aria-label="Scroll left" className="flex h-full w-8 items-center justify-center"><svg className="size-2" viewBox="0 0 8 8" fill="#555"><path d="M8 0V8L0 4Z" /></svg></button>
                    <div className="flex-[525]" />
                    <div className="h-6 flex-[662] rounded-full border-2 border-[#999] bg-gradient-to-b from-[#efefef] to-[#cacaca]" />
                    <div className="flex-[523]" />
                    <button type="button" aria-label="Scroll right" className="flex h-full w-8 items-center justify-center"><svg className="size-2" viewBox="0 0 8 8" fill="#555"><path d="M0 0V8L8 4Z" /></svg></button>
                  </div>
                  <div className="w-8" />
                </div>
              </section>
            </main>

            {/* command prompt */}
            <div className="flex shrink-0 border-b-2 border-[#a8a8a8] pr-1 pb-0.5 pl-1 font-['DejaVu_Sans_Mono',monospace] text-black">
              <Grip className="mt-1 mr-0.5 w-4" />
              <div className="flex min-w-0 flex-1 flex-col">
                <div className="flex h-4 items-center justify-center gap-1">
                  {[0, 1, 2].map((i) => (<span key={i} className="h-2 w-0.5 bg-[#aaa]" />))}
                </div>
                <div className="flex h-[142px]">
                  <div className="flex-1 bg-white px-2 pt-[9px]">
                    <p>Welcome to Embroidermodder 2!</p>
                    <p>Open some of our sample files. Many formats are supported.</p>
                    <p>For help, press F1.</p>
                    <p className="font-bold">Command:</p>
                  </div>
                  <VScroll dim>
                    <div className="w-6 flex-1 rounded-full border-2 border-[#999] bg-gradient-to-r from-[#f2f2f2] to-[#cacaca]" />
                  </VScroll>
                </div>
                <label className="flex h-9 items-center border-t-2 border-[#111] bg-white pl-1.5">
                  <span className="font-bold">Command:</span>
                  <span className="ml-3.5 h-[30px] w-0.5 bg-black" />
                  <input aria-label="Command" className="min-w-0 flex-1 text-[24px] outline-none" />
                </label>
              </div>
            </div>
          </div>

          {/* status bar */}
          <div className="flex h-[60px] shrink-0 items-center gap-[11px] border-b-2 border-[#a5a5a5] pt-0.5 pl-2">
            <span className="w-[601px]">226.0000, -15.0000</span>
            {statusModes.map((m) => (
              <button
                key={m}
                type="button"
                aria-pressed={m === "GRID"}
                className={m === "GRID" ? "h-[42px] rounded-md border-2 border-[#6c6c6c] bg-gradient-to-b from-[#cfcfcf] to-[#a6a6a6] px-3.5 pt-0.5" : "h-[42px] px-4"}
              >
                {m}
              </button>
            ))}
          </div>
        </div>

        {/* guest task bar */}
        <div className="flex h-[54px] shrink-0 items-center border-b-2 border-[#979797] bg-gradient-to-b from-[#474747] to-[#363636] pt-0.5 pl-1.5 text-[#d8d8d8]">
          <button type="button" className="flex items-center gap-3 font-bold">
            <S size="h-10 w-11" vb="0 0 44 40">
              <path d="M2 3H30Q42 3 42 14V37H18Q7 37 7 26V9H2Z" fill="#7dbd45" stroke="#eee" strokeWidth="3" />
              <path d="M13 9V25Q13 31 19 31H31Q35 31 35 26V17Q35 13 31 13Q27 13 27 17V25M27 17Q27 13 23 13Q19 13 19 17V25" stroke="#fff" strokeWidth="3" />
            </S>
            Menu
          </button>
          <button type="button" aria-label="Show desktop" className="ml-5">
            <S size="h-9 w-11" vb="0 0 44 36"><path d="M1 7H43V35H1Z" fill="#7da055" stroke="none" /><path d="M1 1H43V6H1Z" fill="#e8e8e8" stroke="none" /><path d="M9 26H35V35H9Z" fill="#2f421d" stroke="none" /><path d="M4 10H40" stroke="#a2c27e" strokeWidth="2" /></S>
          </button>
          <button type="button" aria-label="Firefox" className="ml-6">
            <S size="size-9" vb="0 0 36 36"><circle cx="19" cy="17" r="15" fill="#2368b0" stroke="none" /><path d="M14 4Q24 0 30 8L25 13L17 12Z" fill="#55b4de" stroke="none" /><path d="M1 3Q5 8 10 7Q15 7 16 10L12 14Q13 17 16 18L12 20Q16 28 24 24Q33 20 31 5Q38 16 33 26Q27 36 17 36Q0 34 0 17Q0 8 1 3Z" fill="#e66a14" stroke="none" /><path d="M31 5Q38 16 33 26Q27 36 17 36Q31 30 31 5Z" fill="#f6b21e" stroke="none" /></S>
          </button>
          <button type="button" aria-label="Terminal launcher" className="ml-2"><TermIcon size="size-9" /></button>
          <button type="button" aria-label="Files" className="ml-2">
            <S size="h-9 w-10" vb="0 0 40 36"><path d="M1 3H15L18 8H36V14H6V33H1Z" fill="#e2e2e2" stroke="none" /><path d="M5 10H39V35H5Z" fill="#82b04f" stroke="#9ccb69" /></S>
          </button>
          <button type="button" className="ml-[22px] flex h-12 w-[318px] items-center gap-1.5 rounded-t-md border-2 border-b-0 border-[#505050] bg-[#424242] pl-3.5 text-[#e8e8e8]">
            <TermIcon size="size-7" />Terminal
          </button>
          <button type="button" className="ml-2 flex h-12 w-[318px] items-center gap-1.5 rounded-t-md border-2 border-b-0 border-[#7a7a7a] bg-gradient-to-b from-[#808080] to-[#555] pl-3.5 whitespace-nowrap text-[#e8e8e8]">
            <Machine size="size-7" />Embroidermodder ...
          </button>
          <div className="flex-1" />
          <div className="flex items-center text-[#cfcfcf]">
            <S size="h-7 w-6" vb="0 0 24 28"><path d="M1.500 15V25H22.500V15" stroke="#ccc" strokeWidth="3" /></S>
            <span className="w-4" />
            <S><path d="M14 1Q21 1 20 9Q19 14 17 16V19L28 24V28H0V24L11 19V16Q9 14 8 9Q7 1 14 1Z" fill="#ccc" stroke="none" /></S>
            <span className="w-3" />
            <S><path d="M0 28L8 20M20 8L28 0" stroke="#ccc" strokeWidth="2" /><path d="M5 23Q4 16 11 14L15 18Q12 24 5 23ZM13 13L17 17Q23 15 23 5Q15 6 13 13Z" fill="#ccc" stroke="none" /></S>
            <span className="w-3" />
            <S><path d="M0 10H5L12 4V24L5 18H0Z" fill="#ccc" stroke="none" /><path d="M15 8Q19 14 15 20" stroke="#ccc" strokeWidth="2.500" /><path d="M19 5Q25 14 19 23" stroke="#aaa" strokeWidth="2" /><path d="M23 2Q30 14 23 26" stroke="#888" strokeWidth="2" /></S>
            <span className="w-3.5" />
            <S><path d="M1 4H6V1H13V4H18V27H1Z" fill="#999" stroke="#ccc" strokeWidth="2" /><path d="M22 8L18 18H22L20 26L28 15H23Z" fill="#ccc" stroke="none" /></S>
            <span>100%</span>
            <span className="w-2.5" />
            <S size="size-9" vb="0 0 36 36"><path d="M18 0Q26 5 35 6Q37 26 18 36Q-1 26 1 6Q10 5 18 0Z" fill="#d6d6d6" stroke="#eee" /><circle cx="18" cy="17" r="12" fill="#3f6fb0" stroke="none" /><path d="M18 9V12M18 14V24" stroke="#cfe0f4" strokeWidth="4" /></S>
            <span className="ml-[18px] font-bold">7:19</span>
            <span className="w-5" />
            <S size="h-6 w-7" vb="0 0 28 24"><path d="M2 3H20V15H2Z" fill="#555" stroke="#ccc" strokeWidth="3" /><path d="M8 20H26V7" stroke="#ccc" strokeWidth="3" /></S>
            <span className="w-1.5" />
          </div>
        </div>

        {/* host status bar */}
        <footer className="flex h-10 shrink-0 items-center justify-end gap-2.5 bg-gradient-to-b from-[#efefef] to-[#cfcfcf] font-['Noto_Sans',sans-serif] text-[26px] text-black">
          <S size="h-8 w-7" vb="0 0 28 32"><rect x="2" y="2" width="24" height="28" rx="4" fill="#cfe6fb" stroke="#2a5fa8" strokeWidth="3" /><circle cx="14" cy="13" r="7" fill="#fff" stroke="#2a5fa8" strokeWidth="2" /><path d="M14 13L8 25H20" stroke="#2a5fa8" strokeWidth="3" /></S>
          <S size="size-8" vb="0 0 32 32"><circle cx="16" cy="16" r="14" fill="#ddd" stroke="#aaa" strokeWidth="2" /><circle cx="16" cy="16" r="9" stroke="#bbb" /><circle cx="16" cy="16" r="3" fill="#999" stroke="#fff" /></S>
          <S size="size-8" vb="0 0 32 32"><path d="M1 31L5 19L18 7L26 14L15 26Z" fill="#5db8f5" stroke="#1055a8" strokeWidth="2" /><path d="M18 7L24 1L31 7L26 14Z" fill="#fff" stroke="#555" strokeWidth="2" /></S>
          <S size="size-8" vb="0 0 32 32"><path d="M12 2H30V18H12Z" fill="#2a7de0" stroke="#555" strokeWidth="3" /><path d="M2 12H20V27H2Z" fill="#2a7de0" stroke="#fff" strokeWidth="5" /><path d="M2 12H20V27H2Z" stroke="#555" strokeWidth="2" /></S>
          <S size="size-8" vb="0 0 32 32"><path d="M1 29V7H11L14 3H31V29Z" fill="#62b7f4" stroke="#1264b8" strokeWidth="2.500" /><path d="M2 9H30" stroke="#e6f6ff" strokeWidth="2" /></S>
          <S size="size-8" vb="0 0 32 32"><path d="M11 6H31V27H11Z" fill="#444" stroke="#333" /><path d="M12 11H30" stroke="#bbb" strokeWidth="3" /><path d="M1 9V23M5 11V21M8 9H11V23H8" stroke="#555" strokeWidth="3" /></S>
          <S size="size-8" vb="0 0 32 32"><rect x="3" y="3" width="26" height="26" fill="#6a7fe0" stroke="#2f3fae" strokeWidth="3" strokeDasharray="3 1" /><rect x="6" y="6" width="20" height="20" stroke="#b9c4f5" strokeWidth="1.500" /><path d="M12 9V18Q12 22 16 22Q20 22 20 18V9" stroke="#fff" strokeWidth="3.500" /></S>
          <span className="h-8 w-1 border-r-2 border-white bg-[#b5b5b5]" />
          <S size="size-8" vb="0 0 32 32"><circle cx="16" cy="15" r="14" fill="#8fcff5" stroke="#1a6cb8" strokeWidth="2" /><path d="M8 5Q18 2 24 6L16 12L6 18Z" fill="#eaf7ff" stroke="none" /><path d="M15 10H23L31 19L20 31L14 25L19 19Z" fill="#5cc020" stroke="#1f6d08" strokeWidth="2" /></S>
          <S size="size-8" vb="0 0 32 32"><rect x="2" y="2" width="28" height="28" rx="3" fill="#f4f2f0" stroke="#555" strokeWidth="3" /><path d="M13 8H19V14H24L16 23L8 14H13Z" fill="#333" stroke="none" /></S>
          <span className="-ml-1 flex items-center gap-2.5">Left <span className="font-['DejaVu_Sans',sans-serif] text-[24px]">⌘</span></span>
          <span className="ml-4 self-end">
            <S size="size-6" vb="0 0 24 24"><path d="M1 23L23 1M9 23L23 9M17 23L23 17" stroke="#777" strokeWidth="2" /></S>
          </span>
        </footer>
      </div>
    </div>
  );
}
